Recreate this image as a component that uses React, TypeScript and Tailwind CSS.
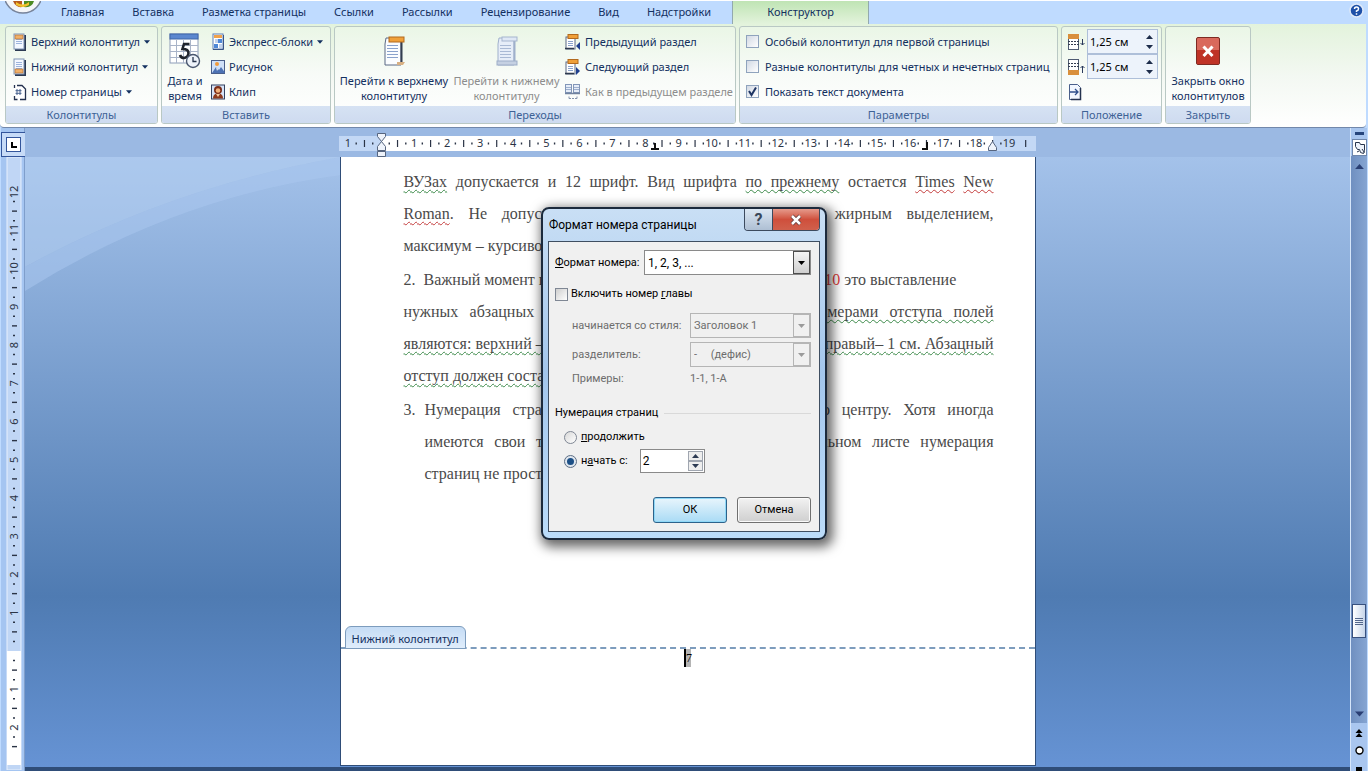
import { useState } from 'react'
import type { ReactNode } from 'react'
import clsx from 'clsx'

const tabs = [
  'Главная',
  'Вставка',
  'Разметка страницы',
  'Ссылки',
  'Рассылки',
  'Рецензирование',
  'Вид',
  'Надстройки',
]

/* ---------- icons ---------- */

function PageIcon({ kind }: { kind: 'header' | 'footer' }) {
  return (
    <svg width="16" height="18" viewBox="0 0 16 18" className="shrink-0">
      <path d="M13 2v15H3" fill="none" stroke="#2c3a52" strokeWidth="2" />
      <rect x="2" y="1" width="10" height="15" fill="#f4f8ff" stroke="#7f93b3" />
      <path d="M4 6.5h6M4 8.5h6M4 10.5h6M4 4.5h6" stroke="#9db4dc" />
      <rect
        x="3"
        y={kind === 'header' ? 2 : 11}
        width="8"
        height="4"
        fill="#f0b069"
        stroke="#b06a2a"
        strokeWidth="0.6"
      />
    </svg>
  )
}

function NumberIcon() {
  return (
    <svg width="16" height="18" viewBox="0 0 16 18" className="shrink-0">
      <path d="M2.5 2.500h8l3 3v11h-11z" fill="#fff" />
      <path d="M5 2.500h5l3.500 3.500v10.500H8M2.500 2v3M2.500 13v3.500h3" fill="none" stroke="#24324f" strokeWidth="1.300" />
      <path d="M5 6v6M8 6v6M3.500 7.700h6M3.500 10.300h6" stroke="#47628e" />
    </svg>
  )
}

function CalendarIcon() {
  return (
    <svg width="32" height="36" viewBox="0 0 32 36">
      <rect x="1" y="1" width="28" height="29" fill="#fff" stroke="#8d9cb8" />
      <rect x="1" y="1" width="28" height="5" fill="#5b87cf" stroke="#3f66a8" />
      <path
        d="M1 12.500h28M1 18.500h28M1 24.500h28M7.500 6v24M14.500 6v24M21.500 6v24"
        stroke="#a9b4c8"
        strokeWidth="1"
      />
      <path
        d="M11 22q1 3 4 3 4.500-1 4.500-5t-6-4l1.500-5h5.500"
        fill="none"
        stroke="#20242c"
        strokeWidth="2.600"
      />
      <circle cx="24" cy="28" r="6.500" fill="#eef3fa" stroke="#4b5870" strokeWidth="1.400" />
      <path d="M24 24v4.500h3.500" fill="none" stroke="#27344c" strokeWidth="1.300" />
    </svg>
  )
}

function BlocksIcon() {
  return (
    <svg width="16" height="18" viewBox="0 0 16 18" className="shrink-0">
      <rect x="3" y="1" width="10" height="15" fill="#fff" stroke="#5d7fb5" />
      <path d="M13.500 2v14.500H3" fill="none" stroke="#3a5585" />
      <rect x="4" y="2" width="8" height="3" fill="#f0a24b" />
      <path d="M5 7h3M5 9h3" stroke="#86a5d8" />
      <rect x="8" y="6" width="4" height="4" fill="#4e87d6" />
      <rect x="4" y="11" width="4" height="4" fill="#4e87d6" />
      <path d="M9 12h3M9 14h3" stroke="#86a5d8" />
    </svg>
  )
}

function PictureIcon() {
  return (
    <svg width="16" height="18" viewBox="0 0 16 18" className="shrink-0">
      <rect x="1.500" y="2.500" width="13" height="13" fill="#cfe0f8" stroke="#4a5f8b" />
      <circle cx="7" cy="6" r="2" fill="#f19a3c" />
      <path d="M2 15l4-6 3 3 2-3 3.500 5v1z" fill="#4d72b4" />
      <path d="M6 9l2 2-1 2z" fill="#fff" />
    </svg>
  )
}

function ClipIcon() {
  return (
    <svg width="16" height="18" viewBox="0 0 16 18" className="shrink-0">
      <rect x="1.500" y="2" width="13" height="14" fill="#d7e3f6" stroke="#33415f" />
      <circle cx="8" cy="7" r="4" fill="#7a2c17" />
      <circle cx="8" cy="7.500" r="2.300" fill="#f2b27c" />
      <path d="M3 15.500c0-4 2.500-5 5-5s5 1 5 5z" fill="#8d3a1d" />
      <path d="M6 11h4l-2 3z" fill="#f5c79d" />
    </svg>
  )
}

function BigPageIcon({ disabled }: { disabled?: boolean }) {
  const line = disabled ? '#a9b9d4' : '#8aa2cc'
  return (
    <svg width="24" height="32" viewBox="0 0 24 32">
      <path d="M4 3h15v27H3V9z" fill={disabled ? '#e6edf8' : '#fbfdff'} stroke={disabled ? '#9fb0cb' : '#5a6884'} />
      <path d="M19.500 5v25" stroke={disabled ? '#9fb0cb' : '#333d50'} strokeWidth="2" />
      <path d="M5 10.500h11M5 13.500h11M5 16.500h11M5 19.500h11M5 22.500h11" stroke={line} />
      {disabled ? (
        <>
          <rect x="7" y="2" width="15" height="4" fill="#dfe8f5" stroke="#a5b5ce" />
          <rect x="2" y="26" width="20" height="4" fill="#c5d0e2" stroke="#9dadc7" />
        </>
      ) : (
        <>
          <rect x="7" y="2" width="15" height="5" fill="#f0a039" stroke="#b26a1e" />
          <path d="M15 27h8l-2 3h-6z" fill="#d8b083" />
        </>
      )}
    </svg>
  )
}

function SectionIcon({ dir }: { dir: 'prev' | 'next' }) {
  return (
    <svg width="18" height="18" viewBox="0 0 18 18" className="shrink-0">
      <rect x="2" y="4" width="9" height="12" fill="#fff" stroke="#5a6884" />
      <path d="M4 8.500h5M4 10.500h5M4 12.500h5" stroke="#8aa2cc" />
      <path d="M1 15.500h9" stroke="#2e394e" strokeWidth="1.500" />
      <rect x="4" y="1.500" width="10" height="4" fill="#f0a039" stroke="#b26a1e" />
      <path d={dir === 'prev' ? 'M16 9v8l-4-4z' : 'M12 9v8l4-4z'} fill="#1f3f8f" />
    </svg>
  )
}

function LinkPrevIcon() {
  return (
    <svg width="18" height="18" viewBox="0 0 18 18" className="shrink-0">
      <rect x="1.500" y="1.500" width="6" height="8" fill="#e6edf8" stroke="#8296b8" />
      <rect x="9.500" y="1.500" width="6" height="8" fill="#e6edf8" stroke="#8296b8" />
      <path d="M2 4.500h5M2 6.500h5M10 4.500h5M10 6.500h5" stroke="#9db0cf" />
      <path d="M1 10.500h15" stroke="#71829f" strokeWidth="1.500" />
      <path d="M5 15.500h8M5 15.500v-3M13 15.500v-3" fill="none" stroke="#8493ad" strokeDasharray="2 1" />
    </svg>
  )
}

function OffsetIcon({ kind }: { kind: 'header' | 'footer' }) {
  const top = kind === 'header'
  return (
    <svg width="18" height="18" viewBox="0 0 18 18" className="shrink-0">
      <rect x="1.500" y="1.500" width="10" height="15" fill="#fff" stroke="#4f5b72" />
      <rect x="1" y={top ? 1 : 12} width="11" height="5" fill="#d98f3c" />
      <path d={top ? 'M1 8.500h11M1 11.500h11' : 'M1 5.500h11M1 8.500h11'} stroke="#333d50" strokeDasharray="2 1" />
      <path
        d={top ? 'M15.500 6v6M13.500 10l2 2 2-2' : 'M15.500 15V8M13.500 10l2-2 2 2'}
        fill="none"
        stroke="#2a3a5c"
      />
    </svg>
  )
}

function AlignTabIcon() {
  return (
    <svg width="16" height="18" viewBox="0 0 16 18">
      <path d="M2.500 1.500h8l3 3v12h-11z" fill="#f2f7ff" stroke="#4a5f8b" />
      <path d="M13.500 5v11.500H4" fill="none" stroke="#24324f" strokeWidth="1.500" />
      <path d="M3 9h8M8 6l3 3-3 3" fill="none" stroke="#2f4f8c" strokeWidth="1.300" />
    </svg>
  )
}

function CloseBigIcon() {
  return (
    <svg width="26" height="30" viewBox="0 0 26 30">
      <rect x="1.500" y="1.500" width="23" height="27" rx="1.500" fill="#d9695c" stroke="#7d2a22" />
      <path d="M2 14h22v14H2z" fill="#bf3326" />
      <path d="M8.500 10.500l9 9.500M17.500 10.500l-9 9.500" stroke="#fff" strokeWidth="3" />
    </svg>
  )
}

function Arrow({ up, className }: { up?: boolean; className?: string }) {
  return (
    <svg width="7" height="4" viewBox="0 0 7 4" className={className}>
      <path d={up ? 'M0 4h7L3.500 0z' : 'M0 0h7L3.500 4z'} fill="currentColor" />
    </svg>
  )
}

function OfficeButton() {
  return (
    <button aria-label="Office" className="absolute left-[5px] top-0">
      <svg width="36" height="14" viewBox="0 0 36 14">
        <circle cx="18" cy="-7" r="19" fill="#f4f5f8" stroke="#77839a" strokeWidth="1.500" />
        <path d="M8 0h9v6q-6 1-9-6z" fill="#b5591c" />
        <path d="M19 0h10q-2 7-10 6z" fill="#4c8a22" />
        <path d="M11 1q7 5 13 0v3q-6 4-13 0z" fill="#f2c12e" />
      </svg>
    </button>
  )
}

/* ---------- ribbon ---------- */

function Group({ title, className, children }: { title: string; className: string; children: ReactNode }) {
  return (
    <section
      className={clsx(
        'flex shrink-0 flex-col overflow-hidden rounded-[3px] border border-[#b9c8c4] bg-linear-to-b from-[#eaf6e6] via-[#f8fbf8] to-white',
        className,
      )}
    >
      <div className="flex flex-1 pt-0.5">{children}</div>
      <h2 className="h-[17px] bg-linear-to-b from-[#d6e2f3] to-[#cedbf0] text-center leading-[17px] text-[#3e6296]">
        {title}
      </h2>
    </section>
  )
}

function SmallButton({
  icon,
  label,
  menu,
  disabled,
}: {
  icon: ReactNode
  label: string
  menu?: boolean
  disabled?: boolean
}) {
  return (
    <button
      disabled={disabled}
      className="flex h-[25px] items-center gap-[3px] whitespace-nowrap text-[#13305f] disabled:text-[#8d8d8d]"
    >
      {icon}
      <span>{label}</span>
      {menu && <Arrow className="ml-px w-[6px]" />}
    </button>
  )
}

function BigButton({
  icon,
  lines,
  disabled,
  className,
}: {
  icon: ReactNode
  lines: [string, string]
  disabled?: boolean
  className?: string
}) {
  return (
    <button
      disabled={disabled}
      className={clsx(
        'flex flex-col items-center whitespace-nowrap leading-[15px] text-[#13305f] disabled:text-[#8d8d8d]',
        className,
      )}
    >
      <span className="flex h-11 items-center">{icon}</span>
      <span>{lines[0]}</span>
      <span>{lines[1]}</span>
    </button>
  )
}

function RibbonCheck({ label, checked }: { label: string; checked?: boolean }) {
  const [on, setOn] = useState(!!checked)
  return (
    <label className="flex h-[25px] items-center gap-1.5 whitespace-nowrap text-[#13305f]">
      <span className="grid">
        <input
          type="checkbox"
          checked={on}
          onChange={() => setOn(!on)}
          className="col-start-1 row-start-1 size-[13px] appearance-none border border-[#8fa3bd] bg-linear-to-br from-[#d2d9e4] to-white"
        />
        {on && (
          <svg viewBox="0 0 13 13" className="pointer-events-none col-start-1 row-start-1 size-[13px]">
            <path d="M3 6l2.500 4L10 2.500" fill="none" stroke="#1e3564" strokeWidth="2" />
          </svg>
        )}
      </span>
      {label}
    </label>
  )
}

function OffsetField({ kind, label }: { kind: 'header' | 'footer'; label: string }) {
  return (
    <div className="flex h-[25px] items-center gap-[2px]">
      <OffsetIcon kind={kind} />
      <div className="flex h-[25px] w-[71px] items-center border border-[#aebfd9] bg-[#edf3fb]">
        <input
          aria-label={label}
          defaultValue="1,25 см"
          className="w-full min-w-0 bg-transparent pl-0.5 text-black outline-none"
        />
        <div className="flex flex-col gap-1.5 px-1 text-[#1d2c4a]">
          <button aria-label="Больше">
            <Arrow up className="w-[7px]" />
          </button>
          <button aria-label="Меньше">
            <Arrow className="w-[7px]" />
          </button>
        </div>
      </div>
    </div>
  )
}

function Ribbon() {
  return (
    <header className="shrink-0 bg-[#bfdbff]">
      <nav className="relative flex h-6 items-stretch border-t border-white pl-[61px]">
        <OfficeButton />
        <div className="flex items-center gap-7 pb-0.5 pr-[21px] text-[#13305f]">
          {tabs.map((tab) => (
            <button key={tab} className="whitespace-nowrap">
              {tab}
            </button>
          ))}
        </div>
        <button className="w-[137px] border-x border-[#93a9ae] bg-linear-to-b from-[#bfe4b4] to-[#e3f3dc] pb-0.5 text-[#13305f]">
          Конструктор
        </button>
        <button aria-label="Справка" className="mb-1 ml-auto mr-1">
          <svg width="15" height="15" viewBox="0 0 15 15">
            <circle cx="7.500" cy="7.500" r="6.500" fill="#1e50a8" stroke="#dfe9f8" strokeWidth="1.500" />
            <path d="M5.500 6q0-2 2-2t2 1.800-2 2.200v1M7.500 10.300v1.500" fill="none" stroke="#fff" strokeWidth="1.500" />
          </svg>
        </button>
      </nav>
      <div className="mr-[2px] flex h-[104px] gap-[3px] rounded-b border-b border-[#7288ab] bg-linear-to-b from-[#e3f3dc] via-[#f3f8f2] to-white pb-[3px] pl-[5px] pt-[2px]">
        <Group title="Колонтитулы" className="w-[153px]">
          <div className="flex flex-col pl-[6px]">
            <SmallButton icon={<PageIcon kind="header" />} label="Верхний колонтитул" menu />
            <SmallButton icon={<PageIcon kind="footer" />} label="Нижний колонтитул" menu />
            <SmallButton icon={<NumberIcon />} label="Номер страницы" menu />
          </div>
        </Group>
        <Group title="Вставить" className="w-[170px]">
          <BigButton icon={<CalendarIcon />} lines={['Дата и', 'время']} className="w-[46px]" />
          <div className="flex flex-col pl-[2px]">
            <SmallButton icon={<BlocksIcon />} label="Экспресс-блоки" menu />
            <SmallButton icon={<PictureIcon />} label="Рисунок" />
            <SmallButton icon={<ClipIcon />} label="Клип" />
          </div>
        </Group>
        <Group title="Переходы" className="w-[402px]">
          <BigButton
            icon={<BigPageIcon />}
            lines={['Перейти к верхнему', 'колонтитулу']}
            className="w-[118px]"
          />
          <BigButton
            icon={<BigPageIcon disabled />}
            lines={['Перейти к нижнему', 'колонтитулу']}
            className="w-[107px]"
            disabled
          />
          <div className="flex flex-col pl-1">
            <SmallButton icon={<SectionIcon dir="prev" />} label="Предыдущий раздел" />
            <SmallButton icon={<SectionIcon dir="next" />} label="Следующий раздел" />
            <SmallButton icon={<LinkPrevIcon />} label="Как в предыдущем разделе" disabled />
          </div>
        </Group>
        <Group title="Параметры" className="w-[319px]">
          <div className="flex flex-col pl-[6px]">
            <RibbonCheck label="Особый колонтитул для первой страницы" />
            <RibbonCheck label="Разные колонтитулы для четных и нечетных страниц" />
            <RibbonCheck label="Показать текст документа" checked />
          </div>
        </Group>
        <Group title="Положение" className="w-[101px]">
          <div className="flex flex-col pl-[5px]">
            <OffsetField kind="header" label="От верхнего края" />
            <OffsetField kind="footer" label="От нижнего края" />
            <button aria-label="Вставить табуляцию" className="flex h-[25px] items-center">
              <AlignTabIcon />
            </button>
          </div>
        </Group>
        <Group title="Закрыть" className="w-[86px]">
          <BigButton icon={<CloseBigIcon />} lines={['Закрыть окно', 'колонтитулов']} className="w-full" />
        </Group>
      </div>
    </header>
  )
}

/* ---------- rulers ---------- */

const CM_X = 33.06
const CM_Y = 38.25

function HorizontalRuler() {
  const zero = 42
  const marks = Array.from({ length: 21 }, (_, i) => i - 1)
  return (
    <svg width="697" height="29" viewBox="0 0 697 29" className="block">
      <rect x="0" y="8" width="697" height="15" fill="#c3d8f5" />
      <rect x={zero} y="8" width="612" height="15" fill="#fff" />
      {marks.map((n) => {
        const x = zero + n * CM_X
        return (
          <g key={n}>
            {n !== 0 && n < 20 && (
              <text x={x} y="19" fontSize="11" textAnchor="middle" fill="#2b3446">
                {Math.abs(n)}
              </text>
            )}
            {n < 20 && x + CM_X / 2 < 695 && (
              <path d={`M${x + CM_X / 2} 12v7`} stroke="#2b3446" strokeWidth="1.200" />
            )}
            {n < 19 && (
              <path
                d={`M${x + CM_X / 4} 14.500v2M${x + (CM_X * 3) / 4} 14.500v2`}
                stroke="#2b3446"
                strokeWidth="1.400"
              />
            )}
          </g>
        )
      })}
      <path d="M38.500 5.500h8v3l-4 5-4-5zM38.500 22.500v-4l4-5 4 5v4zM38.500 23.500h8v5h-8z" fill="#eef3fb" stroke="#56657f" />
      <path d="M316 15v6h-4M316 21h4" fill="none" stroke="#111" strokeWidth="2" />
      <path d="M588 14v7h-5" fill="none" stroke="#111" strokeWidth="2" />
      <path d="M649.500 22.500v-3l4-6 4 6v3z" fill="#eef3fb" stroke="#56657f" />
    </svg>
  )
}

function VerticalRuler() {
  // the footer area starts where the white part begins
  const zero = 494
  const marks = Array.from({ length: 16 }, (_, i) => i - 12)
  return (
    <svg width="25" height="613" viewBox="0 0 25 613" className="block">
      <rect x="6" y="0" width="14" height="613" fill="#c0d6f5" stroke="#e7f0fd" />
      <rect x="6" y={zero} width="14" height="114" fill="#fff" />
      {marks.map((n) => {
        const y = zero + n * CM_Y
        return (
          <g key={n}>
            {n !== 0 && n < 3 && (
              <text
                x="13"
                y={y}
                fontSize="11"
                textAnchor="middle"
                fill="#2b3446"
                transform={`rotate(-90 13 ${y}) translate(0 4)`}
              >
                {Math.abs(n)}
              </text>
            )}
            {n < 3 && <path d={`M11 ${y + CM_Y / 2}h5`} stroke="#2b3446" strokeWidth="1.400" />}
            {n < 3 && <path d={`M12 ${y + CM_Y / 4}h2`} stroke="#2b3446" strokeWidth="1.600" />}
            {n < 2 && <path d={`M12 ${y + (CM_Y * 3) / 4}h2`} stroke="#2b3446" strokeWidth="1.600" />}
          </g>
        )
      })}
    </svg>
  )
}

/* ---------- document ---------- */

function Line({ last, children }: { last?: boolean; children: ReactNode }) {
  return (
    <span className={clsx('block whitespace-nowrap', !last && '[text-align-last:justify]')}>{children}</span>
  )
}

function Err({ red, children }: { red?: boolean; children: ReactNode }) {
  return (
    <span
      className={clsx(
        'underline decoration-wavy decoration-1 underline-offset-2 [text-decoration-skip-ink:none]',
        red ? 'decoration-[#c43c3c]' : 'decoration-[#3c8a4a]',
      )}
    >
      {children}
    </span>
  )
}

function DocumentPage() {
  return (
    <article className="mx-auto flex h-[609px] w-[696px] flex-col border-x border-b border-[#2f4d78] bg-white">
      <div className="flex-1 pl-[63px] pr-[41px] pt-[9px] font-['Liberation_Serif',serif] text-base leading-8 text-[#4a4a4a]">
        <p>
          <Line>
            <Err>ВУЗах</Err> допускается и 12 шрифт. Вид шрифта <Err>по прежнему</Err> остается{' '}
            <Err red>Times</Err> <Err red>New</Err>
          </Line>
          <Line>
            <Err red>Roman</Err>. Не допускается выделение шрифта в тексте жирным выделением,
          </Line>
          <Line last>максимум – курсивом.</Line>
        </p>
        <p className="mt-0.5">
          <Line last>
            2.&nbsp; Важный момент при оформлении рефератов в <span className="text-[#e0403c]">MS Word 2010</span> это
            выставление
          </Line>
          <Line>
            нужных абзацных отступов и полей. <Err>Стандартными размерами отступа полей</Err>
          </Line>
          <Line>
            <Err>являются: верхний – 2,0 см, нижний – 2,0 см, левый – 3,0 см, правый– 1 см. Абзацный</Err>
          </Line>
          <Line last>
            <Err>отступ должен составлять 1,25 см.</Err>
          </Line>
        </p>
        <p className="mt-0.5">
          <Line>
            <span className="inline-block w-[21px] [text-align-last:left]">3.</span>Нумерация страниц обычно ставится
            внизу листа по центру. Хотя иногда
          </Line>
          <span className="block pl-[21px]">
            <Line>имеются свои требования каждого вуза. Но на титульном листе нумерация</Line>
            <Line last>страниц не проставляется.</Line>
          </span>
        </p>
      </div>
      <footer className="h-[139px]">
        <div className="flex border-b-2 border-dashed border-[#7d9cbd] pl-1">
          <span className="-mb-0.5 h-[23px] rounded-t-md border border-[#7d9cbd] bg-linear-to-b from-[#c5dcf5] to-[#e0edfb] px-1.5 leading-6 text-[#13305f]">
            Нижний колонтитул
          </span>
        </div>
        <p className="mx-auto w-[7px] border-l-2 border-black bg-[#b4b4b4] font-['Liberation_Serif',serif] text-xs leading-[18px] text-black">
          7
        </p>
      </footer>
    </article>
  )
}

/* ---------- dialog ---------- */

function Dropdown({
  id,
  options,
  disabled,
  className,
}: {
  id: string
  options: string[]
  disabled?: boolean
  className?: string
}) {
  return (
    <div
      className={clsx(
        'grid h-[25px] border',
        disabled ? 'border-[#b5b5b5] bg-[#f0f0f0] text-[#6d6d6d]' : 'border-[#8a8a8a] bg-white text-black',
        className,
      )}
    >
      <select
        id={id}
        disabled={disabled}
        className="col-start-1 row-start-1 w-full appearance-none bg-transparent pl-[3px] outline-none disabled:opacity-100"
      >
        {options.map((option) => (
          <option key={option}>{option}</option>
        ))}
      </select>
      <span
        className={clsx(
          'pointer-events-none col-start-1 row-start-1 flex w-[17px] items-center justify-center justify-self-end border',
          disabled
            ? 'border-[#b5b5b5] text-[#9a9a9a]'
            : 'border-[#4c4c4c] bg-linear-to-b from-[#f4f4f4] to-[#cfcfcf]',
        )}
      >
        <Arrow />
      </span>
    </div>
  )
}

function PageNumberDialog() {
  const [chapter, setChapter] = useState(false)
  const [mode, setMode] = useState('start')
  const radio =
    'size-[13px] appearance-none rounded-full border border-[#7f8794] bg-linear-to-br from-[#d8d8d8] to-white checked:border-[3px] checked:border-[#dfe6ee] checked:bg-[#1c4f86] checked:bg-none checked:outline checked:outline-[#5f6f84] checked:-outline-offset-1'
  return (
    <div
      role="dialog"
      aria-labelledby="dialog-title"
      className="absolute left-1/2 top-[207px] flex w-[286px] -translate-x-1/2 flex-col rounded-lg border-2 border-[#1c2a3c] bg-linear-to-b from-[#c9dff5] via-[#a3c6ec] to-[#bbdcfa] px-[5px] pb-[6px] font-['Roboto','Noto_Sans',sans-serif] text-black shadow-[3px_4px_12px_3px_rgba(0,0,0,0.6)]"
    >
      <div className="flex h-8 items-start">
        <h1 id="dialog-title" className="pl-px pt-1.5 text-xs leading-5">
          Формат номера страницы
        </h1>
        <div className="ml-auto flex h-[22px] overflow-hidden rounded-b border border-t-0 border-[#3c4a5e]">
          <button
            aria-label="Справка"
            className="w-7 border-r border-[#3c4a5e] bg-linear-to-b from-[#dbe7f3] to-[#aebfd3] text-base font-bold leading-5 text-[#39475a]"
          >
            ?
          </button>
          <button
            aria-label="Закрыть"
            className="flex w-[46px] items-center justify-center bg-linear-to-b from-[#e59a8c] via-[#cf4f3c] to-[#d0604c]"
          >
            <svg width="14" height="12" viewBox="0 0 14 12">
              <path d="M3 2l8 8M11 2l-8 8" stroke="#5d3a3a" strokeWidth="4" />
              <path d="M3 2l8 8M11 2l-8 8" stroke="#fff" strokeWidth="2.500" />
            </svg>
          </button>
        </div>
      </div>

      <div className="whitespace-nowrap border border-[#3f4e61] bg-[#f0f0f0] pb-2 pl-1.5 pr-2">
        <div className="mt-2 flex items-center">
          <label htmlFor="number-format">
            <u>Ф</u>ормат номера:
          </label>
          <Dropdown
            id="number-format"
            options={['1, 2, 3, ...', 'a, b, c, ...', 'I, II, III, ...']}
            className="ml-auto w-[167px] text-xs"
          />
        </div>

        <label className="mt-2 flex h-[22px] items-center gap-[3px]">
          <input
            type="checkbox"
            checked={chapter}
            onChange={() => setChapter(!chapter)}
            className="size-[13px] appearance-none border border-[#7f8794] bg-linear-to-br from-[#cfcfcf] to-white checked:bg-[#1c4f86] checked:bg-none"
          />
          <span>
            Включить номер <u>г</u>лавы
          </span>
        </label>

        <div className="mt-2 grid grid-cols-[1fr_121px] items-center gap-y-1 pl-[17px] text-[#6d6d6d]">
          <label htmlFor="style">начинается со стиля:</label>
          <Dropdown id="style" options={['Заголовок 1']} disabled />
          <label htmlFor="separator">разделитель:</label>
          <Dropdown id="separator" options={['-\u00a0\u00a0\u00a0\u00a0\u00a0(дефис)']} disabled />
          <span>Примеры:</span>
          <span>1-1, 1-A</span>
        </div>

        <fieldset className="mt-3.5">
          <legend className="flex h-6 w-full items-center gap-1.5 after:h-px after:flex-1 after:bg-[#d9d9d9]">
            Нумерация страниц
          </legend>
          <label className="flex h-6 items-center gap-1 pl-[9px]">
            <input
              type="radio"
              name="numbering"
              checked={mode === 'continue'}
              onChange={() => setMode('continue')}
              className={radio}
            />
            <span>
              <u>п</u>родолжить
            </span>
          </label>
          <div className="flex h-6 items-center pl-[9px]">
            <label className="flex items-center gap-1">
              <input
                type="radio"
                name="numbering"
                checked={mode === 'start'}
                onChange={() => setMode('start')}
                className={radio}
              />
              <span>
                н<u>а</u>чать с:
              </span>
            </label>
            <div className="ml-3 flex h-6 w-[65px] border border-[#8a8a8a] bg-white p-px">
              <input aria-label="Начать с" defaultValue="2" className="w-full min-w-0 pl-px text-xs outline-none" />
              <div className="flex w-[15px] shrink-0 flex-col text-[#2c3a52]">
                <button aria-label="Больше" className="flex flex-1 items-center justify-center border border-[#a0a6b0] bg-[#eeeeee]">
                  <Arrow up className="w-[7px]" />
                </button>
                <button aria-label="Меньше" className="flex flex-1 items-center justify-center border border-[#a0a6b0] bg-[#eeeeee]">
                  <Arrow className="w-[7px]" />
                </button>
              </div>
            </div>
          </div>
        </fieldset>

        <div className="mt-6 flex justify-end gap-2.5">
          <button className="h-[26px] w-[74px] rounded-[3px] border border-[#2c628b] bg-linear-to-b from-[#e8f5fc] to-[#a9dbf5] shadow-[inset_0_0_0_1px_#8fd8f7]">
            ОК
          </button>
          <button className="h-[26px] w-[74px] rounded-[3px] border border-[#707070] bg-linear-to-b from-[#f2f2f2] to-[#cfcfcf] shadow-[inset_0_0_0_1px_#fafafa]">
            Отмена
          </button>
        </div>
      </div>
    </div>
  )
}

function ScrollBar() {
  return (
    <aside className="flex w-[17px] shrink-0 flex-col items-center border-l border-[#d5e5fa] bg-[#a9c6ef] text-[#16233f]">
      <div className="mt-1 h-[3px] w-[9px] bg-[#26457c]" />
      <button aria-label="Линейка" className="mt-1 border border-[#6f87ac] bg-white">
        <svg width="13" height="15" viewBox="0 0 13 15">
          <path d="M2.500 2.500h4l1 2h4v6l-1 3-3-1-1-3h-2l-2-3z" fill="#eef3fb" stroke="#27344c" />
          <path d="M9 9l2.500 3.500M4 12l2-1" stroke="#27344c" />
        </svg>
      </button>
      <div className="flex w-full flex-1 flex-col items-center bg-linear-to-r from-[#6f8fc0] to-[#86a5d2] text-[#2a3f74]">
        <button aria-label="Вверх" className="mt-2">
          <Arrow up className="h-[5px] w-[9px]" />
        </button>
        <div className="flex-[455]" />
        <div className="flex h-[34px] w-[14px] flex-col items-center justify-center gap-px border border-[#38517f] bg-linear-to-r from-white to-[#c6d5ea]">
          <i className="h-px w-2 bg-[#53678c]" />
          <i className="h-px w-2 bg-[#53678c]" />
          <i className="h-px w-2 bg-[#53678c]" />
          <i className="h-px w-2 bg-[#53678c]" />
        </div>
        <div className="flex-[76]" />
        <button aria-label="Вниз" className="mb-1.5">
          <Arrow className="h-[6px] w-[9px]" />
        </button>
      </div>
      <button aria-label="Предыдущая страница" className="mt-1.5">
        <svg width="8" height="9" viewBox="0 0 8 9">
          <path d="M4 0l3.500 4h-7zM4 4l3.500 4h-7z" fill="#000" />
        </svg>
      </button>
      <button aria-label="Выбор объекта" className="mt-2">
        <svg width="9" height="9" viewBox="0 0 9 9">
          <circle cx="4.500" cy="4.500" r="3.500" fill="#fff" stroke="#000" strokeWidth="1.400" />
        </svg>
      </button>
      <div className="mt-3 h-1 w-1.5 bg-black" />
    </aside>
  )
}

export default function App() {
  return (
    <div className="relative flex h-screen flex-col overflow-hidden bg-[#bfdbff] font-['Noto_Sans','Open_Sans',sans-serif] text-[11px] leading-4">
      <Ribbon />
      <main className="flex min-h-0 flex-1 pl-px pr-px">
        <div className="flex w-6 shrink-0 flex-col border-r border-[#7f9ecb] bg-[#a5c5f1]">
          <button
            aria-label="Тип табуляции"
            className="mt-1 flex size-[25px] shrink-0 items-center justify-center border border-[#33559b] bg-[#c7dbf7]"
          >
            <span className="flex size-[15px] items-center justify-center border border-[#33559b] bg-white">
              <span className="size-[6px] border-b-2 border-l-2 border-black" />
            </span>
          </button>
          <VerticalRuler />
        </div>
        <div className="flex min-w-0 flex-1 flex-col">
          <div className="flex h-[29px] shrink-0 justify-center bg-[#9bb9e3]">
            <HorizontalRuler />
          </div>
          <div className="relative flex-1 border-b-4 border-[#2f4d78] bg-linear-to-b from-[#a4c2ea] from-0% via-[#4f7bb2] via-72% to-[#6693d4]">
            <svg width="316" height="136" viewBox="0 0 316 136" className="absolute left-0 top-0">
              <path d="M0 0h316q-170 30-316 110z" fill="#b3cdf0" opacity="0.550" />
              <path d="M316 0Q146 30 0 110v24Q150 40 316 18z" fill="#a9c7ef" opacity="0.550" />
            </svg>
            <div className="relative">
              <DocumentPage />
            </div>
          </div>
        </div>
        <ScrollBar />
      </main>
      <PageNumberDialog />
    </div>
  )
}
